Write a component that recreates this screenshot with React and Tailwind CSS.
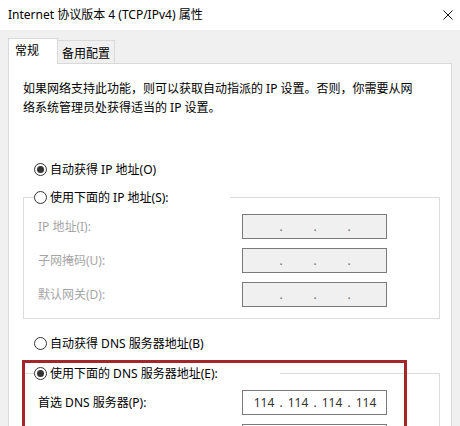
import React from "react";

const FONT = "font-['Noto_Sans','Noto_Sans_CJK_SC',sans-serif]";

function Radio({ checked }) {
  return (
    <span className="flex h-[13px] w-[13px] shrink-0 items-center justify-center rounded-full border border-[#333] bg-white">
      {checked ? <span className="h-[7px] w-[7px] rounded-full bg-[#333]" /> : null}
    </span>
  );
}

function RadioRow({ checked, children }) {
  return (
    <div className="flex h-[20px] items-center gap-[3px] whitespace-nowrap text-black">
      <Radio checked={checked} />
      <span>{children}</span>
    </div>
  );
}

function IpBox({ value, disabled, blank }) {
  const parts = value || ["", "", "", ""];
  return (
    <div
      className={
        "flex h-[25px] w-[145px] items-center border border-[#7a7a7a] pl-[7px] " +
        (disabled ? "bg-[#f0f0f0] text-[#6d6d6d]" : "bg-white text-[#333]")
      }
    >
      {blank
        ? null
        : parts.map((p, i) => (
            <React.Fragment key={i}>
              <span className="w-[28px] text-center">{p}</span>
              {i < 3 ? <span className="w-[6px] text-center">.</span> : null}
            </React.Fragment>
          ))}
    </div>
  );
}

function FieldRow({ label, disabled, value, blank }) {
  return (
    <div className="flex h-[25px] items-center pl-[14px]">
      <span className={"w-[204px] whitespace-nowrap " + (disabled ? "text-[#a6a6a6]" : "text-black")}>
        {label}
      </span>
      <IpBox disabled={disabled} value={value} blank={blank} />
    </div>
  );
}

export default function App() {
  return (
    <div className={"flex h-[426px] w-[460px] flex-col overflow-hidden bg-[#f0f0f0] text-[12px] leading-[19px] " + FONT}>
      {/* title bar */}
      <div className="flex h-[30px] shrink-0 items-center justify-between bg-white pb-[2px] pl-[8px] pr-[7px]">
        <span className="text-black">Internet 协议版本 4 (TCP/IPv4) 属性</span>
        <svg width="10" height="10" viewBox="0 0 10 10" className="mt-[1px]">
          <path d="M0.5 0.5L9.5 9.5M9.5 0.5L0.5 9.5" stroke="#111" strokeWidth="1" />
        </svg>
      </div>

      {/* tabs */}
      <div className="flex h-[33px] shrink-0 items-end pl-[8px]">
        <div className="relative z-10 -mb-px flex h-[26px] w-[50px] items-start border-x border-t border-[#d9d9d9] bg-white pl-[6px] pt-[2px]">
          常规
        </div>
        <div className="flex h-[23px] w-[57px] items-start border-r border-t border-[#d9d9d9] bg-[#f0f0f0] pl-[4px] pt-[3px]">
          备用配置
        </div>
      </div>

      {/* panel */}
      <div className="relative mx-[8px] flex-1 border border-[#d9d9d9] bg-white pl-[14px] pt-[15px] text-black">
        <p className="whitespace-nowrap">
          如果网络支持此功能，则可以获取自动指派的 IP 设置。否则，你需要从网
          <br />
          络系统管理员处获得适当的 IP 设置。
        </p>

        <div className="ml-[11px] mt-[42px]">
          <RadioRow checked>自动获得 IP 地址(O)</RadioRow>
        </div>

        <fieldset className="mt-[8px] w-[417px] border border-[#dcdcdc] pb-[11px] pt-[7px]">
          <legend className="ml-[10px] w-[196px]">
            <RadioRow>使用下面的 IP 地址(S):</RadioRow>
          </legend>
          <div className="flex flex-col gap-[9px]">
            <FieldRow label="IP 地址(I):" disabled />
            <FieldRow label="子网掩码(U):" disabled />
            <FieldRow label="默认网关(D):" disabled />
          </div>
        </fieldset>

        <div className="ml-[11px] mt-[14px]">
          <RadioRow>自动获得 DNS 服务器地址(B)</RadioRow>
        </div>

        <fieldset className="mt-[10px] w-[417px] border border-[#dcdcdc] pb-[11px] pt-[7px]">
          <legend className="ml-[10px] w-[246px]">
            <RadioRow checked>使用下面的 DNS 服务器地址(E):</RadioRow>
          </legend>
          <div className="flex flex-col gap-[9px]">
            <FieldRow label="首选 DNS 服务器(P):" value={["114", "114", "114", "114"]} />
            <FieldRow label="" blank />
          </div>
        </fieldset>

        {/* highlight annotation */}
        <div className="pointer-events-none absolute left-[13px] top-[296px] h-[200px] w-[385px] border-[3px] border-[#a3262a]" />
      </div>
    </div>
  );
}
